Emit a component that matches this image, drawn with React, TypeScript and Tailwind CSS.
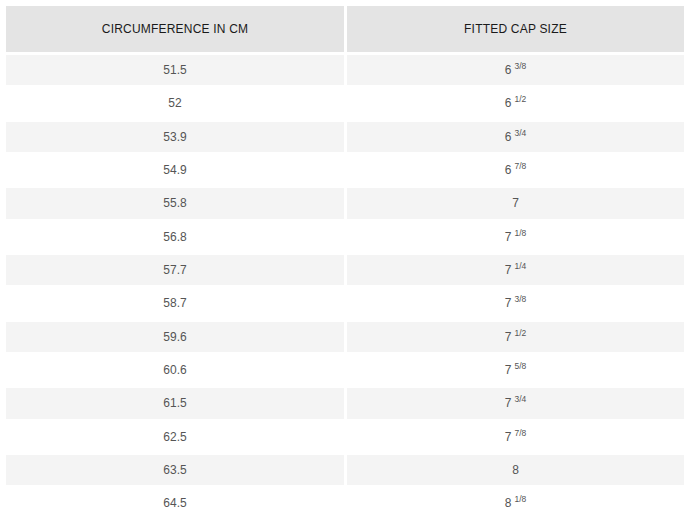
import React from "react";

const rows: [string, string, string][] = [
  ["51.5", "6", "3/8"],
  ["52", "6", "1/2"],
  ["53.9", "6", "3/4"],
  ["54.9", "6", "7/8"],
  ["55.8", "7", ""],
  ["56.8", "7", "1/8"],
  ["57.7", "7", "1/4"],
  ["58.7", "7", "3/8"],
  ["59.6", "7", "1/2"],
  ["60.6", "7", "5/8"],
  ["61.5", "7", "3/4"],
  ["62.5", "7", "7/8"],
  ["63.5", "8", ""],
  ["64.5", "8", "1/8"],
];

export default function App() {
  return (
    <div
      className="w-[692px] h-[527px] bg-white pt-[6px] pl-[6px] pr-[8px] overflow-hidden"
      style={{ fontFamily: '"Liberation Sans", Arial, sans-serif' }}
    >
      <div className="flex flex-col gap-[3px]">
        <div className="grid grid-cols-[338px_337px] gap-[3px] h-[46px]">
          <div className="bg-[#e4e4e4] flex items-center justify-center text-[12px] tracking-[0.2px] text-[#1a1a1a]">
            CIRCUMFERENCE IN CM
          </div>
          <div className="bg-[#e4e4e4] flex items-center justify-center text-[12px] tracking-[0.2px] text-[#1a1a1a]">
            FITTED CAP SIZE
          </div>
        </div>
        {rows.map(([cm, size, frac], i) => (
          <div
            key={cm}
            className="grid grid-cols-[338px_337px] gap-[3px] h-[30.33px]"
          >
            <div
              className={`${i % 2 === 0 ? "bg-[#f4f4f4]" : "bg-white"} flex items-center justify-center text-[12px] text-[#555]`}
            >
              {cm}
            </div>
            <div
              className={`${i % 2 === 0 ? "bg-[#f4f4f4]" : "bg-white"} flex items-center justify-center text-[12px] text-[#555]`}
            >
              <span>
                {size}
                {frac && (
                  <span className="text-[8.5px] relative top-[-5px] ml-[3px]">{frac}</span>
                )}
              </span>
            </div>
          </div>
        ))}
      </div>
    </div>
  );
}
